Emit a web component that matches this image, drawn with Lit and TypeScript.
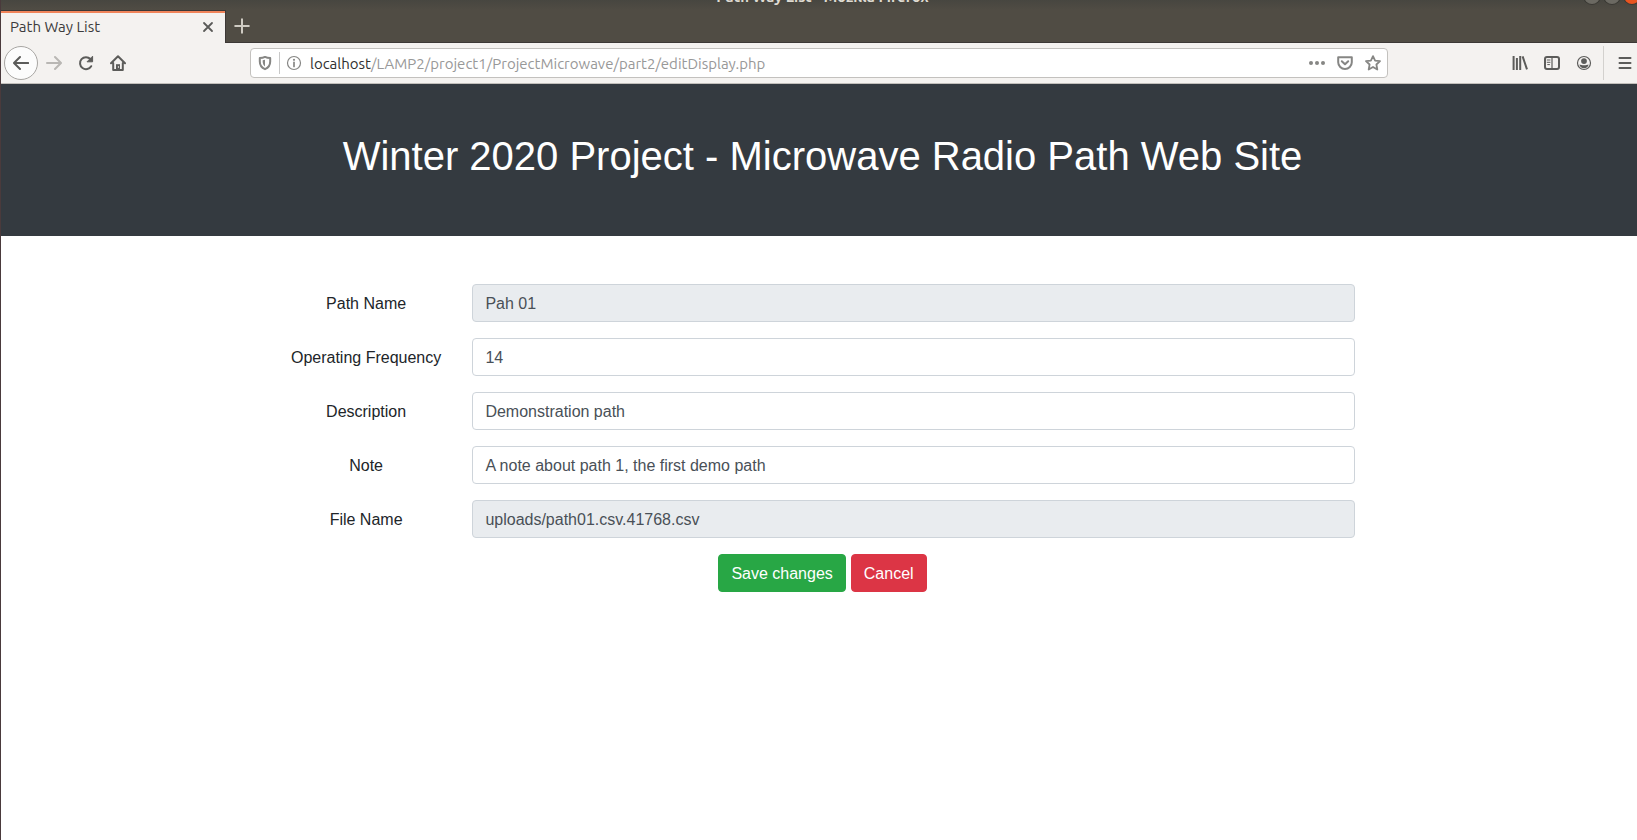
import { LitElement, html, css, svg } from "lit";
import { customElement } from "lit/decorators.js";

const icon = (body: unknown, size = 16) =>
  html`<svg width=${size} height=${size} viewBox="0 0 16 16" fill="none" stroke="currentColor"
    stroke-width="2" stroke-linecap="round" stroke-linejoin="round" aria-hidden="true">${body}</svg>`;

const icons = {
  back: icon(svg`<path d="M15.2 8H1.2M7 2L1 8l6 6"/>`),
  forward: icon(svg`<path d="M1 8h13.6M9 2l6 6-6 6"/>`),
  reload: icon(svg`<path d="M13.2 11.2A6 6 0 1 1 12.4 4"/><path d="M14.6 1.6v5.2H9.4z" fill="currentColor" stroke-width="1"/>`),
  home: icon(svg`<path d="M1 8.2L8 1.3l7 6.9M3.2 8v7h9.6V8"/><path d="M6 15V9.2h4V15z" fill="currentColor" stroke="none"/><path d="M8.4 11.6v.8" stroke="#f4f2f0" stroke-width="1"/>`),
  close: icon(svg`<path d="M4 4l8 8M12 4l-8 8" stroke-width="1.8"/>`),
  plus: icon(svg`<path d="M8 1.2v13.6M1.2 8h13.6"/>`),
  shield: icon(svg`<path d="M8 1.900c1.700.8 3.400 1.100 5.200 1.200v3.400c0 3.700-1.900 6.300-5.200 7.700-3.300-1.400-5.200-4-5.200-7.700V3.100C4.600 3 6.300 2.700 8 1.900z"/><path d="M8 4.800v6.600c-1.500-1-2.300-2.700-2.300-4.900V5.300z" fill="currentColor" stroke="none"/>`),
  info: icon(svg`<circle cx="8" cy="8" r="6.500" stroke-width="1.200"/><path d="M8 7.400v4" stroke-width="1.700"/><circle cx="8" cy="4.800" r="1.100" fill="currentColor" stroke="none"/>`),
  dots: icon(svg`<g fill="currentColor" stroke="none"><circle cx="2" cy="8" r="2"/><circle cx="8" cy="8" r="2"/><circle cx="14" cy="8" r="2"/></g>`),
  pocket: icon(svg`<path d="M1.200 2.200h13.600v5a6.800 6.800 0 0 1-13.600 0z"/><path d="M4.800 6.200L8 9.300l3.200-3.100"/>`),
  star: icon(svg`<path d="M8 1.100l2.100 4.500 4.900.6-3.600 3.300.9 5L8 12l-4.300 2.500.9-5L1 6.200l4.900-.6z" stroke-width="1.800"/>`),
  library: icon(svg`<path d="M1.600 1v14M4.900 3v12M8.200 1v14M10.600 1.400l4.400 13" stroke-linecap="butt" stroke-width="2"/>`),
  sidebar: icon(svg`<rect x="1" y="2" width="14" height="12" rx="2"/><path d="M8 2v12" stroke-width="1.200"/><path d="M3.200 5h2.800M3.200 7.300h2.800M3.700 9.600h1.800" stroke-width="1"/>`),
  account: icon(svg`<circle cx="8" cy="8" r="6.500" stroke-width="1.200"/><circle cx="8" cy="6.100" r="2.900" fill="currentColor" stroke="none"/><path d="M3.400 9.500c2 1 7.200 1 9.200 0-.4 2.200-2.200 3.700-4.600 3.700S3.800 11.700 3.400 9.500z" fill="currentColor" stroke="none"/>`),
  menu: icon(svg`<path d="M2.500 3h11M2.500 8h11M2.500 13h11"/>`),
};

@customElement("browser-chrome")
class BrowserChrome extends LitElement {
  static styles = css`
    :host {
      display: block;
      font-family: "Ubuntu", "Noto Sans", sans-serif;
      font-size: 15px;
      color: #3c3c3c;
    }
    svg { display: block; flex: none; }
    button {
      border: 0;
      padding: 0;
      background: none;
      color: inherit;
      display: grid;
      place-items: center;
      flex: none;
    }
    .titlebar {
      height: 10px;
      overflow: hidden;
      display: grid;
      grid-template-columns: 1fr auto 1fr;
      grid-template-rows: 10px;
      align-items: end;
      background: linear-gradient(#474640, #504c44);
      color: #dfdbd2;
    }
    .title {
      grid-column: 2;
      font-weight: 700;
      line-height: 20px;
      padding-bottom: 3px;
    }
    .controls {
      display: flex;
      justify-content: flex-end;
      gap: 4px;
      padding: 0 4px 6px 0;
    }
    .control {
      width: 16px;
      height: 16px;
      border-radius: 50%;
      background: #6b6962;
      box-shadow: 0 0 0 1px #3a3934;
    }
    .quit { background: #e95420; }
    .tabs {
      display: flex;
      height: 32px;
      background: #504c44;
      border-bottom: 1px solid #3c3836;
    }
    .tab {
      box-sizing: border-box;
      width: 225px;
      height: 33px;
      display: flex;
      align-items: center;
      justify-content: space-between;
      padding: 0 9px;
      font-size: 14px;
      background: #f4f2f0;
      border-top: 1px solid #3c3836;
      border-right: 1px solid #3c3836;
      box-shadow: inset 0 2px #f0845a;
    }
    .tab { font-size: 15px; }
    .tab button { color: #5a5a58; }
    .new-tab { width: 32px; color: #cfcbc3; }
    .toolbar {
      display: flex;
      align-items: center;
      height: 40px;
      padding: 0 3px;
      background: #f4f2f0;
      border-bottom: 1px solid #c2bfbb;
      color: #5c5c5a;
    }
    .tool { width: 32px; height: 32px; }
    .back {
      box-sizing: border-box;
      width: 34px;
      height: 34px;
      border: 1px solid #a8a6a3;
      border-radius: 50%;
      background: #fcfcfc;
    }
    .forward { color: #b9b7b4; }
    .spring { flex: 117 1 0; }
    .address {
      box-sizing: border-box;
      flex: 1134 1 0;
      min-width: 0;
      height: 30px;
      display: flex;
      align-items: center;
      padding: 0 6px;
      background: #fff;
      border: 1px solid #c3c1be;
      border-radius: 4px;
      color: #868684;
    }
    .address button { width: 16px; height: 28px; }
    .divider { width: 1px; height: 22px; margin: 0 6px; background: #c8c8c8; }
    .url {
      flex: 1;
      min-width: 0;
      padding: 2px 0 0 8px;
      line-height: 20px;
      white-space: nowrap;
      overflow: hidden;
      color: #989898;
    }
    .host { color: #303030; }
    .page-actions { display: flex; gap: 12px; }
    .separator { width: 1px; height: 34px; margin: 0 5px 0 3px; background: #d3d1ce; }
  `;

  render() {
    return html`
      <div class="titlebar">
        <div class="title">Path Way List - Mozilla Firefox</div>
        <div class="controls">
          <button class="control" aria-label="Minimize"></button>
          <button class="control" aria-label="Maximize"></button>
          <button class="control quit" aria-label="Close window"></button>
        </div>
      </div>
      <div class="tabs">
        <div class="tab"><span>Path Way List</span><button aria-label="Close tab">${icons.close}</button></div>
        <button class="new-tab" aria-label="New tab">${icons.plus}</button>
      </div>
      <nav class="toolbar">
        <button class="back" aria-label="Back">${icons.back}</button>
        <button class="tool forward" aria-label="Forward">${icons.forward}</button>
        <button class="tool" aria-label="Reload">${icons.reload}</button>
        <button class="tool" aria-label="Home">${icons.home}</button>
        <div class="spring"></div>
        <div class="address">
          <button aria-label="Tracking protection">${icons.shield}</button>
          <span class="divider"></span>
          <button aria-label="Site information">${icons.info}</button>
          <div class="url"><span class="host">localhost</span>/LAMP2/project1/ProjectMicrowave/part2/editDisplay.php</div>
          <div class="page-actions">
            <button aria-label="Page actions">${icons.dots}</button>
            <button aria-label="Save to Pocket">${icons.pocket}</button>
            <button aria-label="Bookmark this page">${icons.star}</button>
          </div>
        </div>
        <div class="spring"></div>
        <button class="tool" aria-label="Library">${icons.library}</button>
        <button class="tool" aria-label="Sidebars">${icons.sidebar}</button>
        <button class="tool" aria-label="Account">${icons.account}</button>
        <span class="separator"></span>
        <button class="tool" aria-label="Menu">${icons.menu}</button>
      </nav>
    `;
  }
}

interface Field {
  id: string;
  label: string;
  value: string;
  readonly?: boolean;
}

@customElement("path-form")
class PathForm extends LitElement {
  static styles = css`
    :host { display: block; }
    form {
      box-sizing: border-box;
      width: 66.6667%;
      margin: 0 auto;
      padding: 48px 0;
      display: grid;
      gap: 16px;
    }
    .row {
      display: grid;
      grid-template-columns: 2fr 10fr;
    }
    label {
      padding: 8px 15px 6px;
      text-align: center;
      line-height: 24px;
      white-space: nowrap;
    }
    .cell { padding: 0 15px; }
    input, button {
      box-sizing: border-box;
      height: 38px;
      padding: 7px 12px 5px;
      border: 1px solid #ced4da;
      border-radius: 4px;
      font: inherit;
      line-height: 24px;
    }
    input {
      display: block;
      width: 100%;
      background: #fff;
      color: #495057;
    }
    input[readonly] { background: #e9ecef; }
    .actions {
      display: flex;
      justify-content: center;
      gap: 5px;
    }
    .save { background: #28a745; border-color: #28a745; color: #fff; }
    .cancel { background: #dc3545; border-color: #dc3545; color: #fff; }
  `;

  private fields: Field[] = [
    { id: "path-name", label: "Path Name", value: "Pah 01", readonly: true },
    { id: "frequency", label: "Operating Frequency", value: "14" },
    { id: "description", label: "Description", value: "Demonstration path" },
    { id: "note", label: "Note", value: "A note about path 1, the first demo path" },
    { id: "file-name", label: "File Name", value: "uploads/path01.csv.41768.csv", readonly: true },
  ];

  render() {
    return html`
      <form @submit=${(e: Event) => e.preventDefault()}>
        ${this.fields.map(
          (f) => html`
            <div class="row">
              <label for=${f.id}>${f.label}</label>
              <div class="cell">
                <input id=${f.id} type="text" .value=${f.value} ?readonly=${f.readonly} />
              </div>
            </div>
          `
        )}
        <div class="actions">
          <button class="save" type="submit">Save changes</button>
          <button class="cancel" type="button">Cancel</button>
        </div>
      </form>
    `;
  }
}

@customElement("app-root")
class AppRoot extends LitElement {
  static styles = css`
    :host {
      display: block;
      overflow: hidden;
      min-height: 100vh;
      background: #fff;
    }
    /* The browser window runs slightly past the right edge of the screen. */
    .window {
      box-sizing: border-box;
      width: calc(100% + 7px);
      min-height: 100vh;
      border-left: 1px solid #4a3a3c;
      font: 16px/24px "Liberation Sans", Arial, sans-serif;
      color: #212529;
    }
    header {
      padding: 48px 0 56px;
      background: #343a40;
      color: #fff;
      text-align: center;
    }
    h1 {
      margin: 0;
      font-size: 40px;
      font-weight: 500;
      line-height: 48px;
    }
  `;

  render() {
    return html`
      <div class="window">
        <browser-chrome></browser-chrome>
        <header><h1>Winter 2020 Project - Microwave Radio Path Web Site</h1></header>
        <main><path-form></path-form></main>
      </div>
    `;
  }
}
